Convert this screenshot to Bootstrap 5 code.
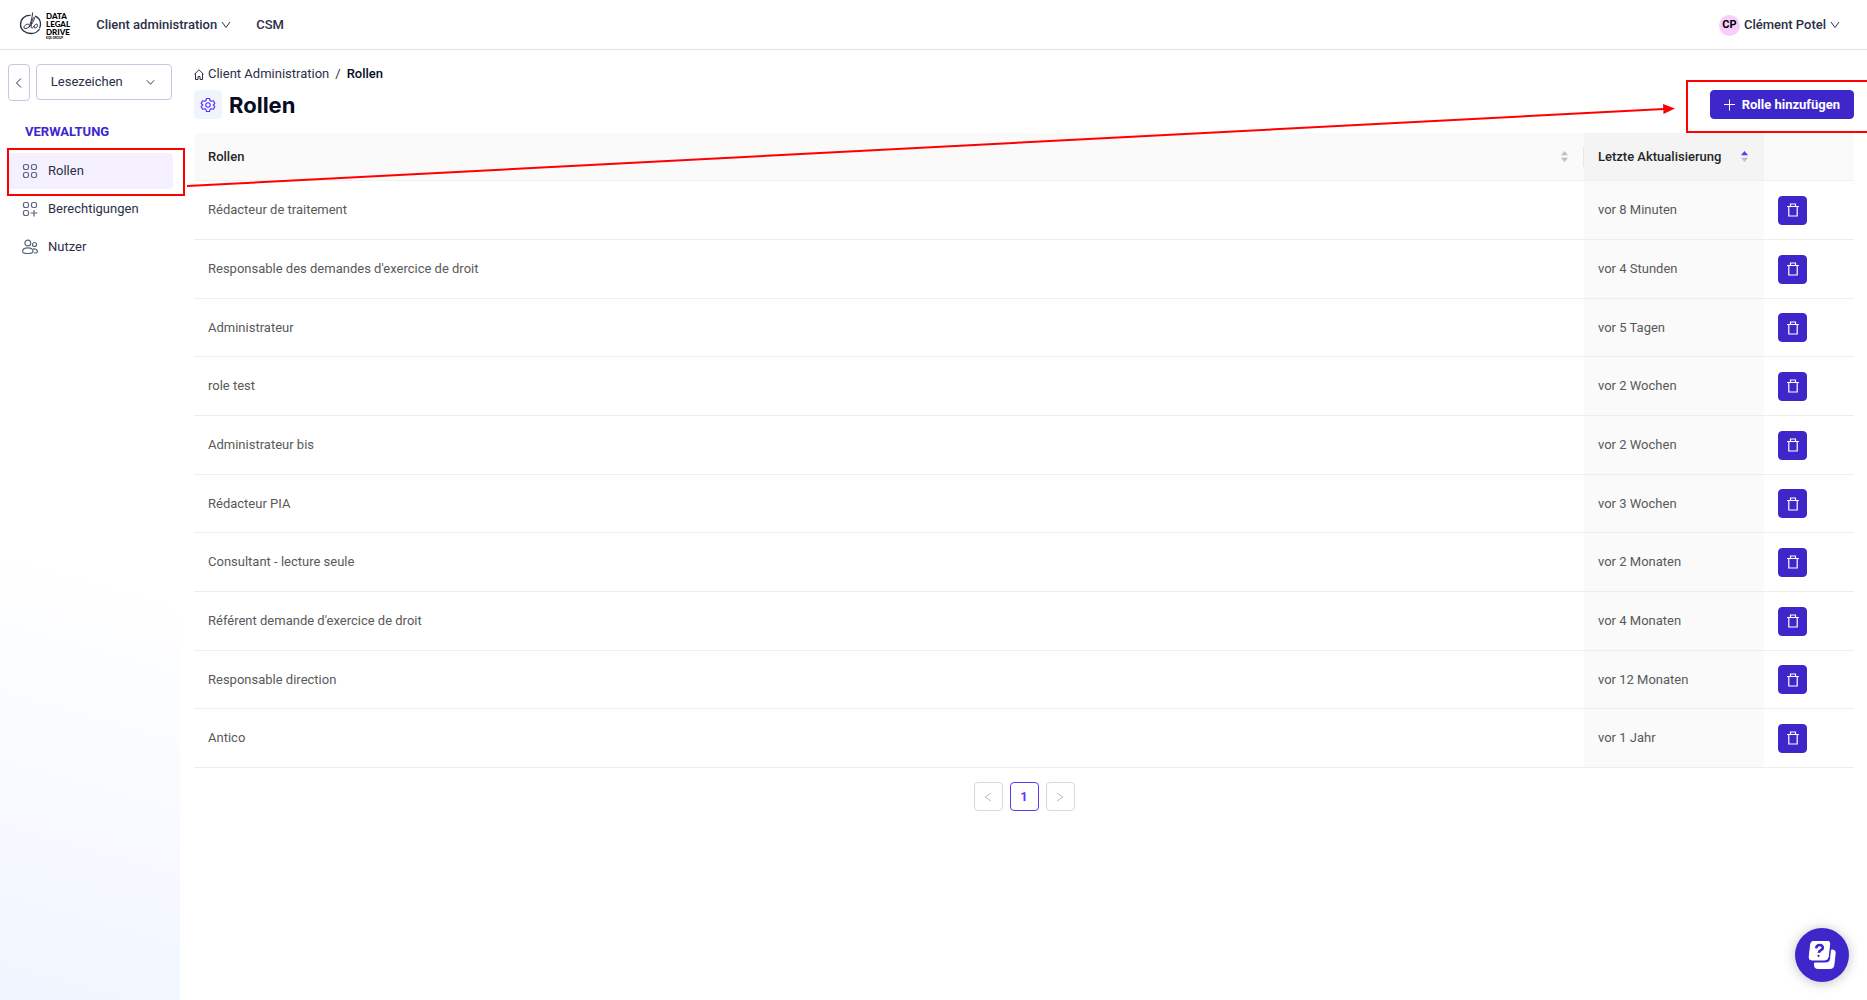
<!DOCTYPE html>
<html lang="de">
<head>
<meta charset="utf-8">
<meta name="viewport" content="width=device-width, initial-scale=1">
<title>Rollen – Client Administration</title>
<link href="https://cdn.jsdelivr.net/npm/bootstrap@5.3.0/dist/css/bootstrap.min.css" rel="stylesheet">
<style>
:root { --brand: #3d27cb; --accent: #5d37f4; --ink: #2a3047; --rule: #e0e2ee; }
body { font-family: Roboto, "Liberation Sans", sans-serif; font-size: 13px; line-height: 20px; color: var(--ink); overflow-x: hidden; }
svg { display: block; flex: none; fill: none; stroke: currentColor; }
a { color: inherit; text-decoration: none; }
.topbar { height: 50px; border-bottom: 1px solid var(--rule); padding: 1px 27px 0 19px; font-weight: 500; }
.brand-name { font: 900 8px/8px Lato, sans-serif; color: #000; margin-left: 4px; padding-top: 2px; }
.brand-sub { display: block; font-size: 3px; line-height: 5px; }
.main-links { gap: 25px; margin-left: 26px; }
.initials { width: 21px; height: 21px; background: #f7cffa; color: #000; font-size: 11px; font-weight: 700; }
.side { width: 180px; flex: none; padding: 14px 8px; background: linear-gradient(196deg, #fff 55%, #f0f5ff 100%); }
.frame { border: 1px solid #c3c8e2; border-radius: 4px; background-color: #fff; color: var(--ink); }
.fold { width: 22px; height: 37px; padding: 0; margin-right: 6px; }
.marks { --bs-form-select-bg-img: url("data:image/svg+xml,%3csvg xmlns='http://www.w3.org/2000/svg' viewBox='0 0 10 10'%3e%3cpath fill='none' stroke='%232a3047' d='M1 2.500 5 7 9 2.500'/%3e%3c/svg%3e"); width: 137px; height: 36px; padding: 0 30px 0 14px; font-size: 13px; background-image: var(--bs-form-select-bg-img); background-position: right 16px center; background-size: 9px 9px; }
.side-title { font-size: 13px; line-height: 20px; font-weight: 700; color: var(--brand); margin: 21px 0 11px 17px; }
.side-link { height: 36px; padding-left: 14px; gap: 10px; border-radius: 4px; margin-right: -1px; margin-bottom: 2px; }
.side-link.active { background: #f4f0ff; }
.side-link svg { color: #5b6480; stroke-width: 1.2; }
main { padding: 14px 13px 14px 14px; min-width: 0; }
.crumb-sep { margin: 0 6px; }
.crumb-now { color: #060b1f; }
.title-row { margin: 6px 0 14px; height: 29px; gap: 7px; }
.title-icon { width: 28px; height: 29px; background: #f0f4ff; border-radius: 4px; color: var(--accent); }
h1 { font-family: Inter, sans-serif; font-size: 22px; line-height: 28px; font-weight: 700; color: #060b1f; }
.btn-brand { --bs-btn-bg: var(--brand); --bs-btn-color: #fff; --bs-btn-hover-bg: #2f1caa; --bs-btn-hover-color: #fff; --bs-btn-border-color: var(--brand); --bs-btn-border-radius: 4px; --bs-btn-font-size: 13px; --bs-btn-font-weight: 700; --bs-btn-line-height: 20px; }
.btn-add { height: 29px; padding: 0 13px; gap: 6px; }
.btn-del { width: 29px; height: 29px; padding: 0; }
.roles { width: 100%; table-layout: fixed; border-collapse: separate; border-spacing: 0; color: #595959; }
.roles th { height: 48px; padding: 0 16px 0 14px; background: #fafafa; color: #262626; font-weight: 500; border-bottom: 1px solid #f0f0f0; }
.roles th:first-child { border-top-left-radius: 4px; }
.roles td { height: 59px; padding: 0 14px; border-bottom: 1px solid #eee; }
.roles tr:nth-child(3n) td { height: 58px; }
.roles th.sorted { background: #f4f4f4; }
.roles td.sorted { background: #fafafa; }
.col-date { width: 180px; }
.col-act { width: 90px; }
.sorter { fill: #bfbfbf; stroke: none; }
.sorter .on { fill: var(--accent); }
.split { width: 1px; height: 20px; background: #e6e6e6; margin-left: 15px; margin-right: -16px; }
.pager { gap: 7px; margin: 14px 0 0; }
.pager .page-link { width: 29px; height: 29px; padding: 0; border-radius: 4px; border: 1px solid #d9d9d9; color: #bfbfbf; font-size: 13px; background: #fff; }
.pager .page-item .page-link { margin: 0; border-radius: 4px; }
.pager .page-item.active .page-link { border-color: var(--accent); color: var(--accent); font-weight: 700; }
.help { position: fixed; right: 18px; bottom: 18px; width: 54px; height: 54px; padding: 0; border: 0; background: var(--brand); color: #fff; box-shadow: 0 1px 12px rgba(0,0,0,.25); z-index: 5; }
.note { position: absolute; border: 2px solid #f00; pointer-events: none; }
.note-nav { inset: -5px -13px -7px -1px; }
.note-add { inset: -10px -13px -14px -24px; border-right: 0; }
.note-arrow { position: absolute; left: 187px; right: 203px; top: 109px; height: 77px; pointer-events: none; }
.note-arrow .shaft { width: 100%; height: 100%; stroke: #f00; stroke-width: 2; overflow: visible; }
.note-arrow .tip { position: absolute; right: -11px; top: -5px; fill: #f00; stroke: none; }
</style>
<script src="https://cdn.jsdelivr.net/npm/bootstrap@5.3.0/dist/js/bootstrap.bundle.min.js"></script>
</head>
<body class="d-flex flex-column min-vh-100 position-relative">
<svg class="d-none">
  <symbol id="i-down" viewBox="0 0 10 10"><path d="M1 2 5 7.500 9 2"/></symbol>
  <symbol id="i-trash" viewBox="0 0 14 14"><path d="M1 3.500h12M4.500 3.500v-2.500h5v2.500M2.800 3.500v9.500h8.400V3.500" stroke-width="1.200"/></symbol>
</svg>

<header class="topbar d-flex align-items-center">
  <a href="#" class="d-flex align-items-center" aria-label="Data Legal Drive">
    <svg width="23" height="28" viewBox="0 0 23 28" stroke="#111"><path d="M11.500 4.500C6 4 1.500 8 1.500 13.500S6.500 22.500 12 22.500c4 0 7-2 8.500-4.500M16 5.200c3.500 1.300 5.500 4 5.500 8 0 1.500-.5 3-1 4" stroke-width="1.300"/><path d="M13.500 1.500C13.500 7 11.500 12 10 16.500M10.500 14c-1.500-2-5 0-5.500 2s2.500 2 5 0 5.500-7 5.500-9-2 0-2.800 4-.9 6.500.6 6c1.500-.4 2.500-4 4.200-4s1 3.500-.7 4-2-1.500-1.300-2.500" stroke-width="1"/></svg>
    <span class="brand-name">DATA<br>LEGAL<br>DRIVE<span class="brand-sub">EQS GROUP</span></span>
  </a>
  <nav class="main-links d-flex flex-grow-1">
    <a href="#" class="d-flex align-items-center gap-1">Client administration <svg width="10" height="10"><use href="#i-down"/></svg></a>
    <a href="#">CSM</a>
  </nav>
  <a href="#" class="d-flex align-items-center gap-1"><span class="initials rounded-circle d-flex align-items-center justify-content-center">CP</span>Clément Potel <svg width="10" height="10"><use href="#i-down"/></svg></a>
</header>

<div class="d-flex flex-grow-1">
  <aside class="side">
    <div class="d-flex">
      <button class="frame fold d-flex align-items-center justify-content-center" type="button" aria-label="Einklappen"><svg width="10" height="10" viewBox="0 0 10 10"><path d="M7 .5 2.500 5 7 9.500"/></svg></button>
      <select class="form-select frame marks" aria-label="Lesezeichen"><option>Lesezeichen</option></select>
    </div>
    <h2 class="side-title">VERWALTUNG</h2>
    <nav>
      <div class="position-relative">
        <a href="#" class="side-link active d-flex align-items-center"><svg width="16" height="16" viewBox="0 0 16 16"><rect x="1.500" y="1.500" width="5" height="5" rx="1.700"/><rect x="9.500" y="1.500" width="5" height="5" rx="1.700"/><rect x="1.500" y="9.500" width="5" height="5" rx="1.700"/><rect x="9.500" y="9.500" width="5" height="5" rx="1.700"/></svg>Rollen</a>
        <div class="note note-nav"></div>
      </div>
      <a href="#" class="side-link d-flex align-items-center"><svg width="16" height="16" viewBox="0 0 16 16"><rect x="1.500" y="1.500" width="5" height="5" rx="1.700"/><rect x="9.500" y="1.500" width="5" height="5" rx="1.700"/><rect x="1.500" y="9.500" width="5" height="5" rx="1.700"/><path d="M12 9v6.500M8.500 12h7"/></svg>Berechtigungen</a>
      <a href="#" class="side-link d-flex align-items-center"><svg width="16" height="16" viewBox="0 0 16 16"><circle cx="5.800" cy="4" r="2.900"/><circle cx="12.500" cy="5.500" r="2"/><path d="M.6 12.500c0-2.200 2-3.700 5.200-3.700s5.200 1.500 5.200 3.700c0 1.500-1.200 2-5.200 2s-5.200-.5-5.200-2zM11 10c2.500-.5 4.500.8 4.500 2.700 0 1-1 1.300-3.500 1.300"/></svg>Nutzer</a>
    </nav>
  </aside>

  <main class="flex-grow-1">
    <nav class="d-flex align-items-center" aria-label="Breadcrumb">
      <a href="#" class="d-flex align-items-center"><svg class="me-1" width="10" height="11" viewBox="0 0 10 11"><path d="M.3 5.500 5 .8l4.700 4.700M1.500 4.500v6h2.500v-3h2v3h2.500v-6"/></svg>Client Administration</a>
      <span class="crumb-sep">/</span><span class="fw-medium crumb-now">Rollen</span>
    </nav>
    <div class="title-row d-flex align-items-center">
      <span class="title-icon d-flex align-items-center justify-content-center"><svg width="16" height="16" viewBox="0 0 16 16"><path d="M6.500 1.500h3l.5 2 1.300.8 2-.6 1.500 2.600L13.300 8l1.500 1.700-1.500 2.600-2-.6-1.300.8-.5 2h-3l-.5-2-1.300-.8-2 .6-1.500-2.600L2.700 8 1.200 6.300l1.500-2.600 2 .6L6 3.500z" stroke-width="1.200" stroke-linejoin="round"/><circle cx="8" cy="8" r="2.200" stroke-width="1.100"/></svg></span>
      <h1 class="m-0">Rollen</h1>
      <div class="position-relative ms-auto">
        <button type="button" class="btn btn-brand btn-add d-flex align-items-center"><svg width="12" height="12" viewBox="0 0 12 12"><path d="M5.500 .5v11M0 5.500h11"/></svg>Rolle hinzufügen</button>
        <div class="note note-add"></div>
      </div>
    </div>
    <table class="roles">
      <colgroup><col><col class="col-date"><col class="col-act"></colgroup>
      <thead><tr>
        <th scope="col"><div class="d-flex align-items-center">Rollen<svg class="sorter ms-auto" width="7" height="11" viewBox="0 0 7 11"><path d="M3.500 0 7 4.300H0z"/><path d="M3.500 11 7 6.700H0z"/></svg><span class="split"></span></div></th>
        <th scope="col" class="sorted"><div class="d-flex align-items-center justify-content-between">Letzte Aktualisierung<svg class="sorter" width="7" height="11" viewBox="0 0 7 11"><path class="on" d="M3.500 0 7 4.300H0z"/><path d="M3.500 11 7 6.700H0z"/></svg></div></th>
        <th scope="col" aria-label="Aktionen"></th>
      </tr></thead>
      <tbody id="rows"></tbody>
    </table>
    <nav aria-label="Seiten">
      <ul class="pagination pager justify-content-center">
        <li class="page-item disabled"><a class="page-link d-flex align-items-center justify-content-center" aria-label="Zurück"><svg width="10" height="10" viewBox="0 0 10 10"><path d="M8 1 2 5l6 4"/></svg></a></li>
        <li class="page-item active"><a class="page-link d-flex align-items-center justify-content-center" href="#">1</a></li>
        <li class="page-item disabled"><a class="page-link d-flex align-items-center justify-content-center" aria-label="Weiter"><svg width="10" height="10" viewBox="0 0 10 10"><path d="M2 1l6 4-6 4"/></svg></a></li>
      </ul>
    </nav>
  </main>
</div>

<div class="note-arrow">
  <svg class="shaft" viewBox="0 0 100 100" preserveAspectRatio="none"><path d="M0 100 100 0" vector-effect="non-scaling-stroke"/></svg>
  <svg class="tip" width="12" height="10" viewBox="0 0 12 10"><path d="M0 0 12 4.500.5 10z"/></svg>
</div>

<button type="button" class="help rounded-circle d-flex align-items-center justify-content-center" aria-label="Hilfe">
  <svg width="28" height="28" viewBox="0 0 28 28" stroke="none"><path fill="#fff" d="M6.500 0H19q3 0 2.700 3l-1.500 13q-.4 3-3.400 3H4q-3.200 0-2.800-3L2.700 3Q3.200 0 6.500 0zM24.500 9q3 0 2.700 3l-1.400 12.500q-.3 3-3.300 3H9.500q-3 0-3-3V22H17q5 0 5.600-4.500L23.500 9z"/><path fill="none" stroke="#3d27cb" stroke-width="2.600" d="M8.200 7.300c.3-4.300 7-4.300 6.600-.3-.3 2.500-3.600 2-3.900 4.800"/><circle cx="10.500" cy="14.800" r="1.600" fill="#3d27cb"/></svg>
</button>

<script>
const roles = [
  ["Rédacteur de traitement", "vor 8 Minuten"],
  ["Responsable des demandes d'exercice de droit", "vor 4 Stunden"],
  ["Administrateur", "vor 5 Tagen"],
  ["role test", "vor 2 Wochen"],
  ["Administrateur bis", "vor 2 Wochen"],
  ["Rédacteur PIA", "vor 3 Wochen"],
  ["Consultant - lecture seule", "vor 2 Monaten"],
  ["Référent demande d'exercice de droit", "vor 4 Monaten"],
  ["Responsable direction", "vor 12 Monaten"],
  ["Antico", "vor 1 Jahr"]
];
document.getElementById("rows").innerHTML = roles.map(([name, updated]) => `
  <tr><td>${name}</td><td class="sorted">${updated}</td>
  <td><button type="button" class="btn btn-brand btn-del d-flex align-items-center justify-content-center" aria-label="Löschen"><svg width="14" height="14"><use href="#i-trash"/></svg></button></td></tr>`).join("");
</script>
</body>
</html>
